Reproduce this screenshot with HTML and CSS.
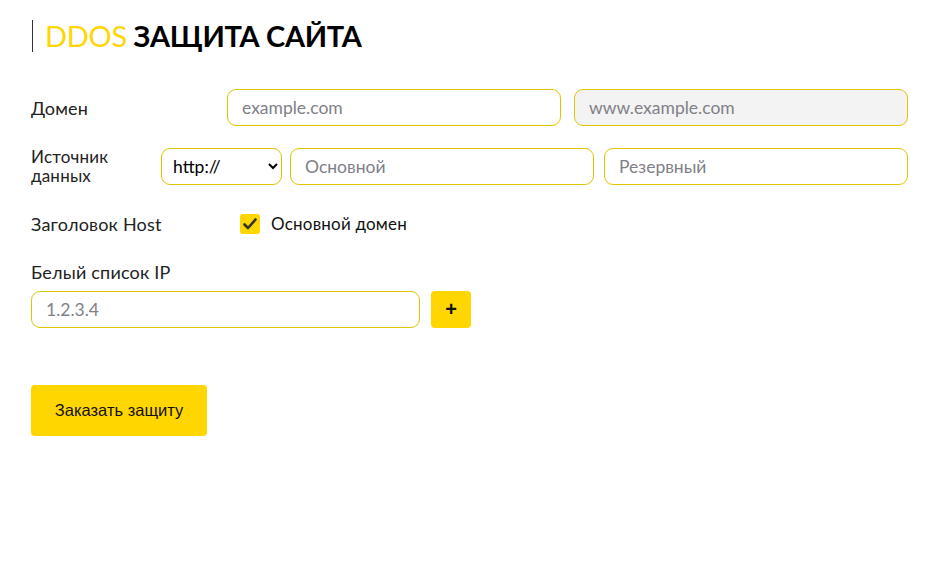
FILE: index.html
```html
<!DOCTYPE html>
<html lang="ru">
<head>
    <meta charset="UTF-8">
    <meta name="viewport" content="width=device-width, initial-scale=1.0">
    <title>DDOS защита сайта</title>
    <link rel="stylesheet" href="styles.css">
</head>
<body>
    <div class="container">
        <h1 class="title"><span class="accent">DDOS</span> ЗАЩИТА САЙТА</h1>

        <div class="row row-domain">
            <label class="label label-domain">Домен</label>
            <input class="field" type="text" placeholder="example.com">
            <input class="field field-disabled" type="text" placeholder="www.example.com" disabled>
        </div>

        <div class="row row-source">
            <label class="label label-source">Источник данных</label>
            <select class="field select">
                <option>http://</option>
                <option>https://</option>
            </select>
            <input class="field" type="text" placeholder="Основной">
            <input class="field" type="text" placeholder="Резервный">
        </div>

        <div class="row row-host">
            <span class="label label-host">Заголовок Host</span>
            <label class="check">
                <span class="check-box">
                    <svg width="14" height="12" viewBox="0 0 14 12"><path d="M1.5 6.5 L5 10 L12.5 1.5" fill="none" stroke="#333" stroke-width="2.6" stroke-linecap="round" stroke-linejoin="round"/></svg>
                </span>
                Основной домен
            </label>
        </div>

        <div class="label label-ip">Белый список IP</div>
        <div class="row row-ip">
            <input class="field field-ip" type="text" placeholder="1.2.3.4">
            <button class="btn-add">+</button>
        </div>

        <button class="btn">Заказать защиту</button>
    </div>
</body>
</html>
```

FILE: styles.css
```css
body {
    margin: 0;
    font-family: Lato, "Noto Sans", sans-serif;
    color: #111;
    background: #fff;
}
.container {
    padding: 20px 26px 0 31px;
}
.title {
    margin: 0 0 37px 1px;
    padding-left: 12px;
    border-left: 1px solid #333;
    font-size: 29px;
    line-height: 32px;
    letter-spacing: -0.3px;
    font-weight: 700;
    color: #000;
}
.accent {
    color: #ffd600;
    font-weight: 400;
}
.row {
    display: flex;
    align-items: center;
}
.label {
    font-size: 18px;
    line-height: 20px;
    letter-spacing: 0.2px;
    color: #222;
}
.field {
    box-sizing: border-box;
    height: 37px;
    border: 1px solid #e2c500;
    border-radius: 9px;
    padding: 0 14px;
    font-family: inherit;
    font-size: 17.5px;
    background: #fff;
    color: #222;
    outline: none;
}
.field::placeholder {
    color: #808088;
}
.field-disabled {
    background: #f3f3f3;
}
.row-domain .field {
    width: 334px;
}
.row-domain .field + .field {
    margin-left: 13px;
}
.label-domain {
    width: 196px;
}
.row-source {
    margin-top: 21px;
}
.label-source {
    width: 110px;
    margin-right: 20px;
    font-size: 17px;
    line-height: 19px;
}
.select {
    width: 121px;
    padding: 0 4px 0 7px;
    color: #000;
}
.row-source .field + .field {
    width: 304px;
    margin-left: 8px;
}
.row-source .field:last-child {
    margin-left: 10px;
}
.row-host {
    margin-top: 28px;
}
.label-host {
    width: 209px;
}
.check {
    display: flex;
    align-items: center;
    gap: 11px;
    font-size: 17px;
    letter-spacing: 0.2px;
    color: #111;
}
.check-box {
    width: 20px;
    height: 20px;
    border-radius: 3px;
    background: #ffd600;
    display: flex;
    align-items: center;
    justify-content: center;
}
.label-ip {
    margin-top: 28px;
}
.row-ip {
    margin-top: 9px;
}
.field-ip {
    width: 389px;
}
.btn-add {
    margin-left: 11px;
    width: 40px;
    height: 37px;
    border: none;
    border-radius: 4px;
    background: #ffd600;
    font-size: 20px;
    font-weight: 700;
    color: #111;
    cursor: pointer;
}
.btn {
    margin-top: 57px;
    width: 176px;
    height: 51px;
    border: none;
    border-radius: 4px;
    background: #ffd600;
    font-family: "Liberation Sans", Arial, sans-serif;
    font-size: 16.5px;
    color: #111;
    cursor: pointer;
}
```
